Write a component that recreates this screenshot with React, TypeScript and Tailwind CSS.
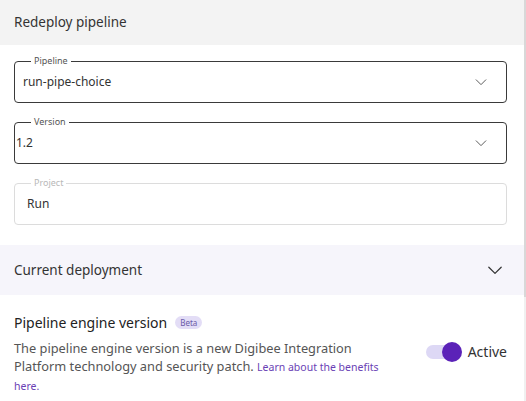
import React from "react";

function ChevronDown({ className }: { className?: string }) {
  return (
    <svg viewBox="0 0 16 16" fill="none" className={className}>
      <path d="M2.5 5.5 8 11l5.5-5.5" stroke="currentColor" strokeWidth="1.1" strokeLinecap="round" strokeLinejoin="round" />
    </svg>
  );
}

type FieldProps = {
  label: string;
  value: string;
  select?: boolean;
  disabled?: boolean;
  inset?: string;
};

function Field({ label, value, select, disabled, inset = "pl-[8px]" }: FieldProps) {
  return (
    <div
      className={
        "relative h-[42px] rounded-[4px] border flex items-center pr-[18px] " +
        inset +
        (disabled ? " border-[#dcdcdc]" : " border-[#3a3a3a]")
      }
    >
      <span
        className={
          "absolute left-[16px] top-[-7px] bg-white px-[3px] text-[9px] leading-[12px] " +
          (disabled ? "text-[#b8b8b8]" : "text-[#555]")
        }
      >
        {label}
      </span>
      <span className="flex-1 text-[12px] text-[#333]">{value}</span>
      {select && <ChevronDown className="w-[14px] h-[14px] text-[#555]" />}
    </div>
  );
}

export default function App() {
  return (
    <div className="w-[526px] h-[401px] overflow-hidden bg-white flex font-['Noto_Sans',sans-serif]">
      <div className="w-[524px] flex flex-col">
        <div className="h-[45px] bg-[#f3f3f3] px-[14px] flex items-center text-[13.5px] text-[#333]">
          Redeploy pipeline
        </div>

        <div className="pl-[14px] pr-[17px] pt-[16px] pb-[20px] flex flex-col gap-[19px]">
          <Field label="Pipeline" value="run-pipe-choice" select />
          <Field label="Version" value="1.2" select inset="pl-[1px]" />
          <Field label="Project" value="Run" disabled inset="pl-[12px]" />
        </div>

        <div className="h-[50px] bg-[#f6f5fb] pl-[14px] pr-[20px] flex items-center justify-between text-[13.5px] text-[#333]">
          <span>Current deployment</span>
          <ChevronDown className="w-[18px] h-[18px] text-[#333]" />
        </div>

        <div className="px-[14px] pt-[17px]">
          <div className="flex items-center gap-[8px]">
            <span className="text-[14px] text-[#222]">Pipeline engine version</span>
            <span className="rounded-full bg-[#e3ddf6] px-[5px] text-[8px] leading-[13px] text-[#6b5aa8]">Beta</span>
          </div>
          <div className="mt-[6px] flex items-start justify-between">
            <p className="w-[372px] text-[12.8px] leading-[18px] text-[#555]">
              The pipeline engine version is a new Digibee Integration Platform technology and security patch.{" "}
              <a className="text-[10.5px] text-[#6a3fb5]">Learn about the benefits here.</a>
            </p>
            <div className="flex items-center gap-[12px] mr-[3px] mt-[2px]">
              <div className="relative w-[30px] h-[14px] rounded-full bg-[#ddd8f5]">
                <div className="absolute right-[-6px] top-[-3px] w-[20px] h-[20px] rounded-full bg-[#5b22b8]" />
              </div>
              <span className="text-[14px] text-[#333]">Active</span>
            </div>
          </div>
        </div>
      </div>
      <div className="w-[2px] flex flex-col">
        <div className="h-[297px] bg-[#d8d8d8]" />
        <div className="flex-1 bg-[#f0f0f0]" />
      </div>
    </div>
  );
}
